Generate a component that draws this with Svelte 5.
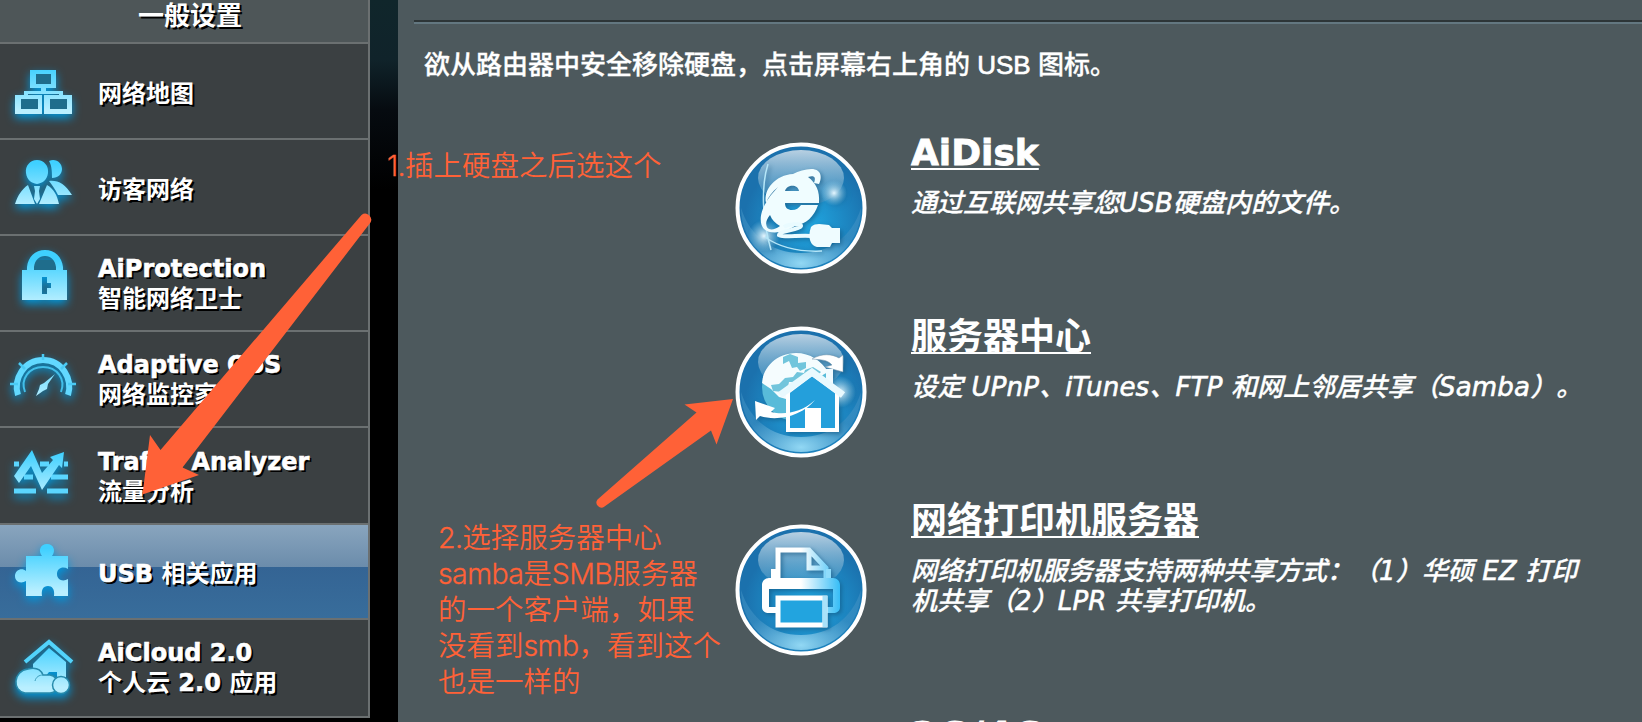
<script>
  const menu = [
    { icon: 'map', lines: ['网络地图'] },
    { icon: 'guest', lines: ['访客网络'] },
    { icon: 'lock', lines: ['AiProtection', '智能网络卫士'] },
    { icon: 'gauge', lines: ['Adaptive QoS', '网络监控家'] },
    { icon: 'traffic', lines: ['Traffic Analyzer', '流量分析'] },
    { icon: 'puzzle', lines: ['USB 相关应用'], active: true },
    { icon: 'cloud', lines: ['AiCloud 2.0', '个人云 2.0 应用'] }
  ];
  const features = [
    { icon: 'ie', title: 'AiDisk', desc: ['通过互联网共享您USB硬盘内的文件。'] },
    { icon: 'house', title: '服务器中心', desc: ['设定 UPnP、iTunes、FTP 和网上邻居共享（Samba）。'] },
    { icon: 'printer', title: '网络打印机服务器', desc: ['网络打印机服务器支持两种共享方式：（1）华硕 EZ 打印', '机共享（2）LPR 共享打印机。'] },
    { icon: '', title: '3G/4G', desc: [] }
  ];
  const note = ['2.选择服务器中心', 'samba是SMB服务器', '的一个客户端，如果', '没看到smb，看到这个', '也是一样的'];
  // Latin and CJK runs are spaced separately
  const runs = (s) => s.match(/[\x20-\x7e]+|[^\x20-\x7e]+/g) ?? [];
</script>

{#snippet mixed(s)}{#each runs(s) as r}<span class:lat={r.charCodeAt(0) < 127}>{r}</span>{/each}{/snippet}

<div class="page">
  <nav class="side">
    <div class="head">一般设置</div>
    {#each menu as m}
      <div class="item {m.icon}" class:active={m.active}>
        <svg class="glyph" width="90" height="94" viewBox="0 0 90 94">
          <defs>
            <linearGradient id="g-{m.icon}" x1="0" y1="18" x2="0" y2="72" gradientUnits="userSpaceOnUse">
              <stop offset="0.1" stop-color="#3fd0ff" /><stop offset="0.9" stop-color="#b9efff" />
            </linearGradient>
          </defs>
          <g fill="url(#g-{m.icon})">
            {#if m.icon === 'map'}
              <path fill="#1f6d8c" d="M33 28h20v15H33zM18 53h21v15H18zM47 53h22v15H47z" />
              <path fill-rule="evenodd" d="M30 26h26v18H46v3h17v4h9v19H44V51h15v-1H28v1h14v19H15V51h9v-4h17v-3H30zM36 30v10h15V30zM21 55v10h17V55zM50 55v10h17V55z" />
            {:else if m.icon === 'guest'}
              <path d="M49 21c7-3 13 2 13 8 0 5-4 9-10 9 0-5 0-12-3-17zM49 41c9-1 16 3 23 14l-14 0c-3-6-6-10-9-14z" />
              <path d="M37 20c7 0 12 6 11 13-1 7-5 10-11 11-6-1-10-4-11-11-1-7 4-13 11-13zM28 45l7 19H15c3-9 7-15 13-19zM47 45c7 4 10 10 12 19H39zM34 46h6l-1 5 1 8-3 5-3-5 1-8z" />
            {:else if m.icon === 'lock'}
              <path fill="#1f6d8c" d="M33 24h24v13H33z" />
              <path fill-rule="evenodd" d="M22 34h5v-3c1-10 8-17 18-17s17 7 18 17v3h4v30H22zM34 34h22v-3c-1-7-5-11-11-11s-10 4-11 11zM42 41v17h5v-6h4v-5h-4v-6z" />
            {:else if m.icon === 'gauge'}
              <path fill="none" stroke="#62d9ff" stroke-width="6" d="M18 63c-5-16 6-35 25-35s30 19 25 35" />
              <path fill="none" stroke="#42bfe9" stroke-width="2" d="M25 60c-5-13 4-25 18-25s23 12 18 25" />
              <path fill="none" stroke="#4acbf5" stroke-width="2.500" d="M43 22v6M19 31l6 6M67 31l-6 6M10 52h8M76 52h-8" />
              <path d="M55 42l-7 10-1 5-4 2-7 5 3-7 1-4 4-2z" />
            {:else if m.icon === 'traffic'}
              <path fill="none" stroke="#5bd6ff" stroke-width="5" d="M14 35h5M40 35h9M64 35h4M24 48h9M51 48h17M14 62h22M47 62h21" />
              <path d="M32 21l10 23 11-13-3-3 14-5-2 16-3-3-17 25-11-24-12 17-5-7z" />
            {:else if m.icon === 'puzzle'}
              <path d="M26 31h16c-4-5-2-12 5-12s9 7 5 12h16v13c-5-3-11-1-11 5s6 8 11 5v17H54c1-7-2-10-6-10-5 0-7 4-6 10H26V56c-5 3-11 1-11-5s7-9 11-5z" />
            {:else if m.icon === 'cloud'}
              <path fill="none" stroke="#52d3fb" stroke-width="4" d="M25 41l24-20 23 20" />
              <path d="M49 27l17 14v15h-9v-5h-8l-4 5-7-5h-5v-8z" />
              <path stroke="#278bac" stroke-width="1.500" d="M30 72h-5c-13-2-12-22 3-24 8-2 13 1 15 6h7c10 1 11 18 0 18z" />
              <circle cx="61" cy="64" r="8.500" stroke="#278bac" stroke-width="1.500" />
              <path fill="none" stroke="#3c9fbd" d="M35 60c1-4 4-6 8-6" />
            {/if}
          </g>
        </svg>
        <div class="label">
          {#each m.lines as l}<div>{@render mixed(l)}</div>{/each}
        </div>
      </div>
    {/each}
  </nav>
  <div class="gap"></div>
  <main>
    <hr />
    <p class="intro">{@render mixed('欲从路由器中安全移除硬盘，点击屏幕右上角的 USB 图标。')}</p>
    {#each features as f}
      <section class:partial={!f.icon}>
        <div class="pic">
          {#if f.icon}
            <svg width="132" height="132" viewBox="0 0 132 132">
              <defs>
                <radialGradient id="b-{f.icon}" cx="0.55" cy="0.62" r="0.5">
                  <stop offset="0" stop-color="#20a8e2" /><stop offset="1" stop-color="#1b71ad" />
                </radialGradient>
                <linearGradient id="t-{f.icon}" x1="0" y1="0" x2="0" y2="1">
                  <stop offset="0" stop-color="#b8d0e2" /><stop offset="1" stop-color="#4f9ac5" stop-opacity="0.45" />
                </linearGradient>
                <radialGradient id="l-{f.icon}" cx="0.5" cy="0.92" r="0.55">
                  <stop offset="0" stop-color="#92d8f4" /><stop offset="1" stop-color="#3f91c4" stop-opacity="0.6" />
                </radialGradient>
                <radialGradient id="s-{f.icon}">
                  <stop offset="0" stop-color="#e6f7ff" /><stop offset="1" stop-color="#8fd3f2" stop-opacity="0" />
                </radialGradient>
                <linearGradient id="w-{f.icon}" x1="27" y1="0" x2="105" y2="0" gradientUnits="userSpaceOnUse">
                  <stop offset="0.5" stop-color="#fff" /><stop offset="1" stop-color="#36bdf6" />
                </linearGradient>
              </defs>
              <circle cx="66" cy="66" r="63.500" fill="url(#b-{f.icon})" stroke="#fff" stroke-width="4" />
              <path fill="url(#l-{f.icon})" d="M6 66c9 29 32 45 60 45s51-16 60-45c0 34-27 60-60 60S6 100 6 66z" />
              <ellipse cx="66" cy="36" rx="43" ry="28" fill="url(#t-{f.icon})" />
              <g class="emblem">
                {#if f.icon === 'ie'}
                  <circle cx="99" cy="51" r="13" fill="url(#s-ie)" />
                  <circle cx="29" cy="94" r="16" fill="url(#s-ie)" />
                  <path fill="none" stroke="#b5e6f8" stroke-width="1.500" d="M33 22c-7 22-6 55 3 86M30 95c14 10 34 15 57 14" />
                  <path fill="#f0fdff" fill-rule="evenodd" d="M31 61c-3-14 10-28 27-29 8-4 20-7 25-3 4 3 3 9 1 13l-5-1c2-5 1-8-6-6 8 6 12 14 11 26H50c0 5 3 7 7 7 4 0 7-2 9-5h17c-4 12-12 19-22 20-10 8-26 10-32 4-7-8-2-22 7-34l7-8C37 50 33 55 31 61zM50 49h14c-1-7-12-7-14 0zM35 73c-5 6-5 12-1 14 3 1 7 0 11-3-5-3-8-6-10-11z" />
                  <path fill="none" stroke="#e9fbff" stroke-width="4" d="M76 94c-13-1-27 2-32-1 0-4 20-5 22-9 1-3-13-2-17 1" />
                  <path fill="#effcff" d="M76 85c5-5 13-2 18-2l3 3h8v15h-8l-2 4H82c-6-1-10-9-6-20z" />
                {:else if f.icon === 'house'}
                  <circle cx="61" cy="61" r="34" fill="#58bbd9" />
                  <path fill="#f5fcfe" d="M27 57c1-16 15-30 34-30 14 0 26 8 32 19L70 59 51 73l-7-2-8-8z" />
                  <path fill="#72c5dc" d="M48 31l7-3 8 3 0 6 8-1 0 6-6 3-3-4-5 1-3-7-6 3zM70 44l8-3 8 5-5 5-7-1-6 5-5-2-4 3-5 0-1 5-6 5-9-1-2-6 8-1 6-6 8-1 4-5 7 1z" />
                  <circle cx="105" cy="66" r="16" fill="url(#s-house)" />
                  <path fill="#fff" stroke="#7594aa" stroke-width="0.500" d="M77 33c10-6 20-5 27-1l4-3 0 17-18-5 7-2c-5-6-12-5-20-6z" />
                  <path fill="#f1fbff" d="M91 43h7v17h-7z" />
                  <path fill="#249fdb" stroke="#fff" stroke-width="4" d="M53 66l24-18 25 18v38H53z" />
                  <path fill="none" stroke="#e9f9fe" stroke-width="7" d="M45 69l32-23 31 23" />
                  <path fill="#fff" d="M70 82h16v21H70z" />
                  <path fill="#fff" d="M80 74c-14 13-31 15-44 12l4-4-20-7 1 19 4-4c19 6 43-1 55-16z" />
                {:else}
                  <path fill="none" stroke="url(#w-printer)" stroke-width="5" d="M43 56V26h31l17 18v12M74 26v18h18" />
                  <path fill="#fff" d="M36 45h5v9h-5z" />
                  <path fill="#8fdcfb" d="M91 45h5v9h-5z" />
                  <path fill="url(#w-printer)" fill-rule="evenodd" d="M34 54h64c4 0 7 3 7 7v22c0 4-3 6-7 6H34c-4 0-7-2-7-6V61c0-4 3-7 7-7zm0 11v18h64V65z" />
                  <path fill="#22a4df" stroke="#fff" stroke-width="5" d="M43 74h47v27H43z" />
                  <path fill="none" stroke="#a9e2fa" stroke-width="5" d="M90 72v31" />
                {/if}
              </g>
            </svg>
          {/if}
        </div>
        <div class="text">
          <h2>{@render mixed(f.title)}</h2>
          {#each f.desc as d}<div class="desc">{@render mixed(d)}</div>{/each}
        </div>
      </section>
    {/each}
  </main>

  <svg class="arrows" width="1642" height="722" viewBox="0 0 1642 722" fill="#ff6137">
    <path d="M361.5 215a6 6 0 0 1 9 7.500L182.500 467.500 199 475 142.500 494.500 150 435l10.500 15z" />
    <path d="M597.500 499.500L696.500 412.500 684.500 404.500 733 399l-16.500 45.500-5.500-14L604.500 506.500a5 5 0 0 1-7-7z" />
  </svg>
  <div class="note one">{@render mixed('1.插上硬盘之后选这个')}</div>
  <div class="note two">{#each note as n}<div>{@render mixed(n)}</div>{/each}</div>
</div>

<style>
  .page {
    position: relative;
    display: flex;
    width: 1642px;
    height: 722px;
    overflow: hidden;
    background: #000;
    color: #fff;
    font-family: "DejaVu Sans", "Noto Sans CJK SC", sans-serif;
    font-variant-ligatures: none;
    text-spacing-trim: space-all;
    white-space: nowrap;
  }
  .side {
    width: 368px;
    height: 718px;
    flex: none;
    border-right: 2px solid #6b7071;
    font-size: 24px;
    font-weight: 700;
    text-shadow: 2px 2px 0 #000;
  }
  .head {
    box-sizing: border-box;
    height: 44px;
    padding: 1px 0 0 12px;
    border-bottom: 2px solid #6b7071;
    background: #4e5658;
    font-size: 26px;
    line-height: 30px;
    text-align: center;
  }
  .item {
    display: flex;
    align-items: center;
    box-sizing: border-box;
    height: 96px;
    border-bottom: 2px solid #6b7071;
    background: #3b4042;
  }
  .item.traffic, .item.cloud { height: 98px; }
  .item.traffic { height: 97px; }
  .item.active {
    height: 95px;
    background: linear-gradient(#89a5be 0, #6b8cab 42px, #346494 42px, #386d9b 93px);
  }
  .item.cloud { height: 98px; }
  .glyph { flex: none; filter: drop-shadow(0 4px 5px #0098dc); }
  .label { margin-left: 8px; line-height: 30px; padding-top: 2px; }
  .map .label, .guest .label, .puzzle .label { padding-top: 5px; }
  .cloud .label { padding-top: 0; }
  .side .lat { -webkit-text-stroke: 0.6px #fff; }
  .gap {
    width: 28px;
    flex: none;
    background: linear-gradient(#10262b 0, #10232a 60px, #060b10 110px, #000 190px);
  }
  main { flex: 1; background: #4d595d; }
  hr {
    box-sizing: content-box;
    height: 2px;
    margin: 20px 0 0 16px;
    border: 0;
    border-top: 2px solid #2d3537;
    background: #637780;
  }
  .intro {
    margin: 25px 0 34px 26px;
    height: 33px;
    font: 500 26px/33px "Liberation Sans", "Noto Sans CJK SC", sans-serif;
    -webkit-text-stroke: 0.3px #fff;
  }
  .intro .lat { -webkit-text-stroke: 0.7px #fff; }
  section { display: flex; min-height: 184px; }
  .pic { width: 473px; flex: none; display: flex; align-items: center; padding: 0 0 1px 337px; box-sizing: border-box; }
  .emblem { filter: drop-shadow(2px 2px 2px #12547d99); }
  .text { margin-left: 40px; padding: 14px 0 80px; }
  h2 {
    width: max-content;
    margin: 0 0 12px;
    height: 46px;
    font-size: 36px;
    line-height: 46px;
    font-weight: 700;
    text-decoration: underline;
    text-decoration-thickness: 2px;
    text-underline-offset: 3px;
    text-decoration-skip-ink: none;
  }
  h2 .lat { -webkit-text-stroke: 0.8px #fff; }
  .partial .text { padding-top: 16px; }
  .partial .lat { letter-spacing: 2.4px; }
  .desc { font-size: 26px; line-height: 30px; height: 30px; font-style: italic; font-weight: 500; -webkit-text-stroke: 0.3px #fff; }
  .desc .lat { letter-spacing: 0.2px; -webkit-text-stroke: 0.6px #fff; }
  .arrows { position: absolute; left: 0; top: 0; }
  .note {
    position: absolute;
    color: #ff6137;
    font: 350 28.5px/36px Inter, "Noto Sans CJK SC", sans-serif;
  }
  .note .lat { font-weight: 300; letter-spacing: -0.6px; -webkit-text-stroke: 0.3px #ff6137; }
  .one { left: 387px; top: 148px; }
  .two { left: 438px; top: 520px; }
</style>
